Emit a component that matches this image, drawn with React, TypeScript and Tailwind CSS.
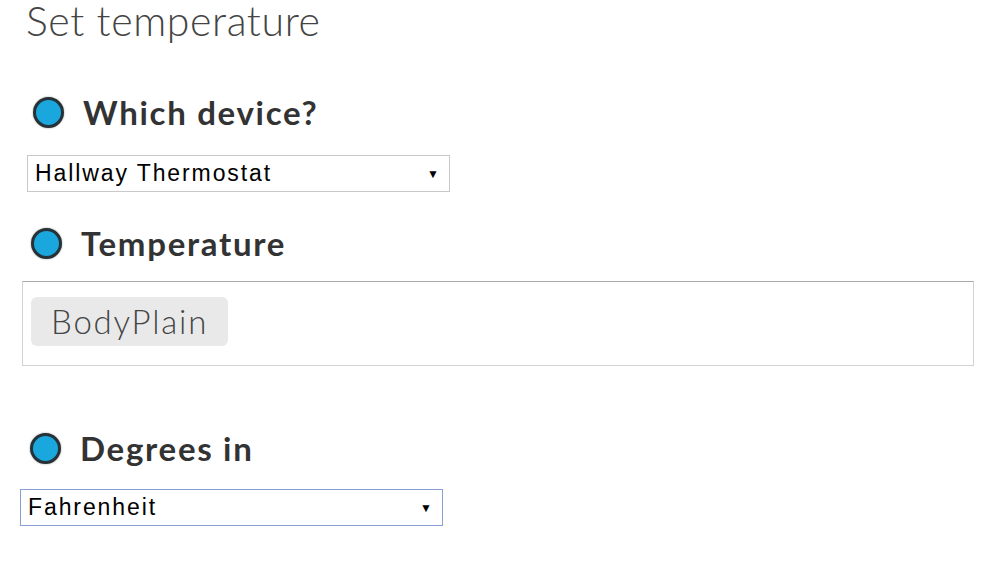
const heading = "font-['Lato','Open_Sans',sans-serif]";
const arial = "font-['Liberation_Sans',Arial,sans-serif]";

function Bullet() {
  return (
    <span className="inline-block h-[31px] w-[31px] shrink-0 rounded-full border-[3px] border-[#263238] bg-[#1aa7dd] shadow-[0_0_2px_rgba(0,0,0,0.4)]" />
  );
}

function Label({ children }: { children: React.ReactNode }) {
  return (
    <div className="flex items-center gap-[19px]">
      <Bullet />
      <span className={`${heading} text-[33px] font-bold leading-none tracking-[1.7px] text-[#333]`}>{children}</span>
    </div>
  );
}

function FakeSelect({ value, focused }: { value: string; focused?: boolean }) {
  return (
    <div
      className={`flex h-[37px] w-[423px] items-center justify-between border bg-white pl-[7px] pr-[10px] ${arial} text-[23px] tracking-[1.9px] text-black ${
        focused ? "border-[#8a9fd6]" : "border-[#c9c9c9]"
      }`}
    >
      <span>{value}</span>
      <span className="text-[12px] leading-none tracking-normal">▼</span>
    </div>
  );
}

export default function App() {
  return (
    <div className="h-[569px] w-[1000px] overflow-hidden bg-white">
      <div className="flex flex-col pl-[26px]">
        <h1 className={`${heading} mt-[0px] text-[41px] font-light leading-none tracking-[0.6px] text-[#444]`}>Set temperature</h1>

        <div className="mt-[55px] ml-[7px]">
          <Label>Which device?</Label>
        </div>
        <div className="mt-[26px] ml-[1px]">
          <FakeSelect value="Hallway Thermostat" />
        </div>

        <div className="mt-[35px] ml-[5px]">
          <Label>Temperature</Label>
        </div>
        <div className="mt-[21px] ml-[-4px] flex h-[85px] w-[952px] items-start border border-[#d2d2d2] border-t-[#a9a9a9] bg-white pl-[8px] pt-[15px]">
          <span className={`${heading} rounded-[6px] bg-[#e9e9e9] px-[20px] py-[8px] text-[33px] font-light leading-none tracking-[1.8px] text-[#444]`}>
            BodyPlain
          </span>
        </div>

        <div className="mt-[66px] ml-[4px]">
          <Label>Degrees in</Label>
        </div>
        <div className="mt-[24px] ml-[-6px]">
          <FakeSelect value="Fahrenheit" focused />
        </div>
      </div>
    </div>
  );
}
